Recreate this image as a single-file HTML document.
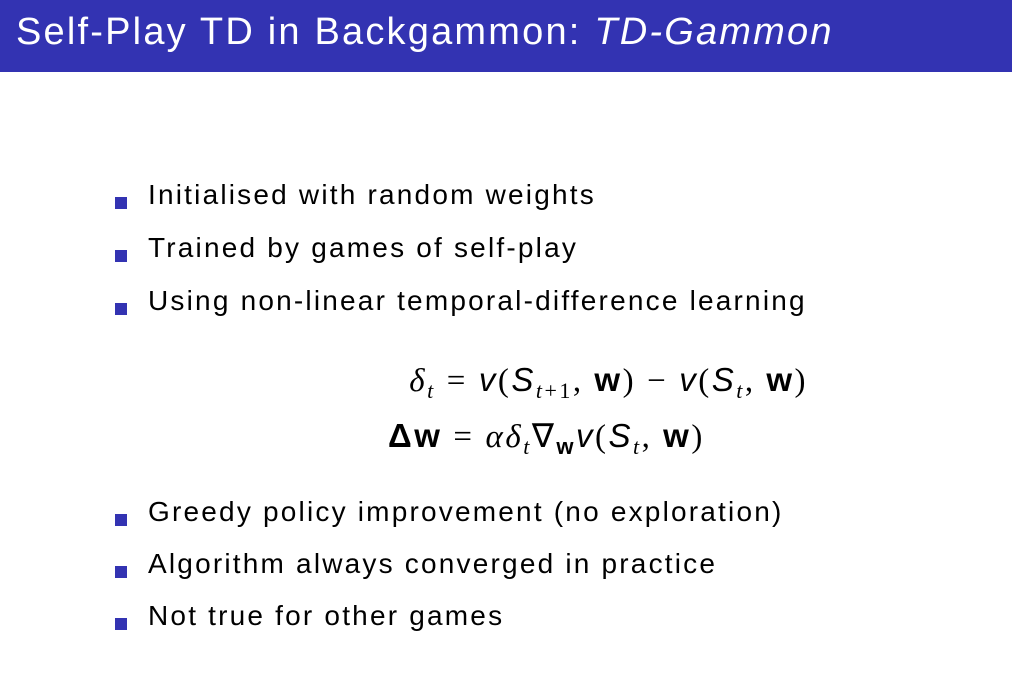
<!DOCTYPE html>
<html><head><meta charset="utf-8"><style>
body{margin:0;width:1012px;height:679px;background:#fff;position:relative;overflow:hidden;font-family:"Liberation Sans","DejaVu Sans",sans-serif;color:#000}
.bar{position:absolute;left:0;top:0;width:1012px;height:72px;background:#3333b2}
.title{position:absolute;left:16px;top:11px;font-size:38px;letter-spacing:2.2px;color:#fff;white-space:nowrap}
.b{position:absolute;left:148px;font-size:28px;letter-spacing:2.2px;white-space:nowrap}
.b:before{content:"";position:absolute;left:-33px;top:18px;width:12px;height:12px;background:#3333b2}
.eq{position:absolute;font-size:33px;letter-spacing:2.5px;white-space:nowrap;font-family:"Liberation Serif",serif}
.eq .s{font-family:"Liberation Sans",sans-serif;font-style:italic}
.eq b{font-family:"Liberation Sans",sans-serif}
.op{margin:0 11px}
sub{font-size:22px;vertical-align:-7px}
</style></head><body>
<div class="bar"></div>
<div class="title">Self-Play TD in Backgammon: <i>TD-Gammon</i></div>
<div class="b" style="top:179px">Initialised with random weights</div>
<div class="b" style="top:232px">Trained by games of self-play</div>
<div class="b" style="top:285px">Using non-linear temporal-difference learning</div>
<div class="eq" style="right:204px;top:361px"><i>δ</i><sub><i>t</i></sub><span class="op">=</span><span class="s">v</span>(<span class="s">S</span><sub><i>t</i>+1</sub>, <b>w</b>)<span class="op">−</span><span class="s">v</span>(<span class="s">S</span><sub><i>t</i></sub>, <b>w</b>)</div>
<div class="eq" style="left:388px;top:416px"><b>Δw</b><span class="op">=</span><i>αδ</i><sub><i>t</i></sub>∇<sub><b>w</b></sub><span class="s">v</span>(<span class="s">S</span><sub><i>t</i></sub>, <b>w</b>)</div>
<div class="b" style="top:496px">Greedy policy improvement (no exploration)</div>
<div class="b" style="top:548px">Algorithm always converged in practice</div>
<div class="b" style="top:600px">Not true for other games</div>
</body></html>
